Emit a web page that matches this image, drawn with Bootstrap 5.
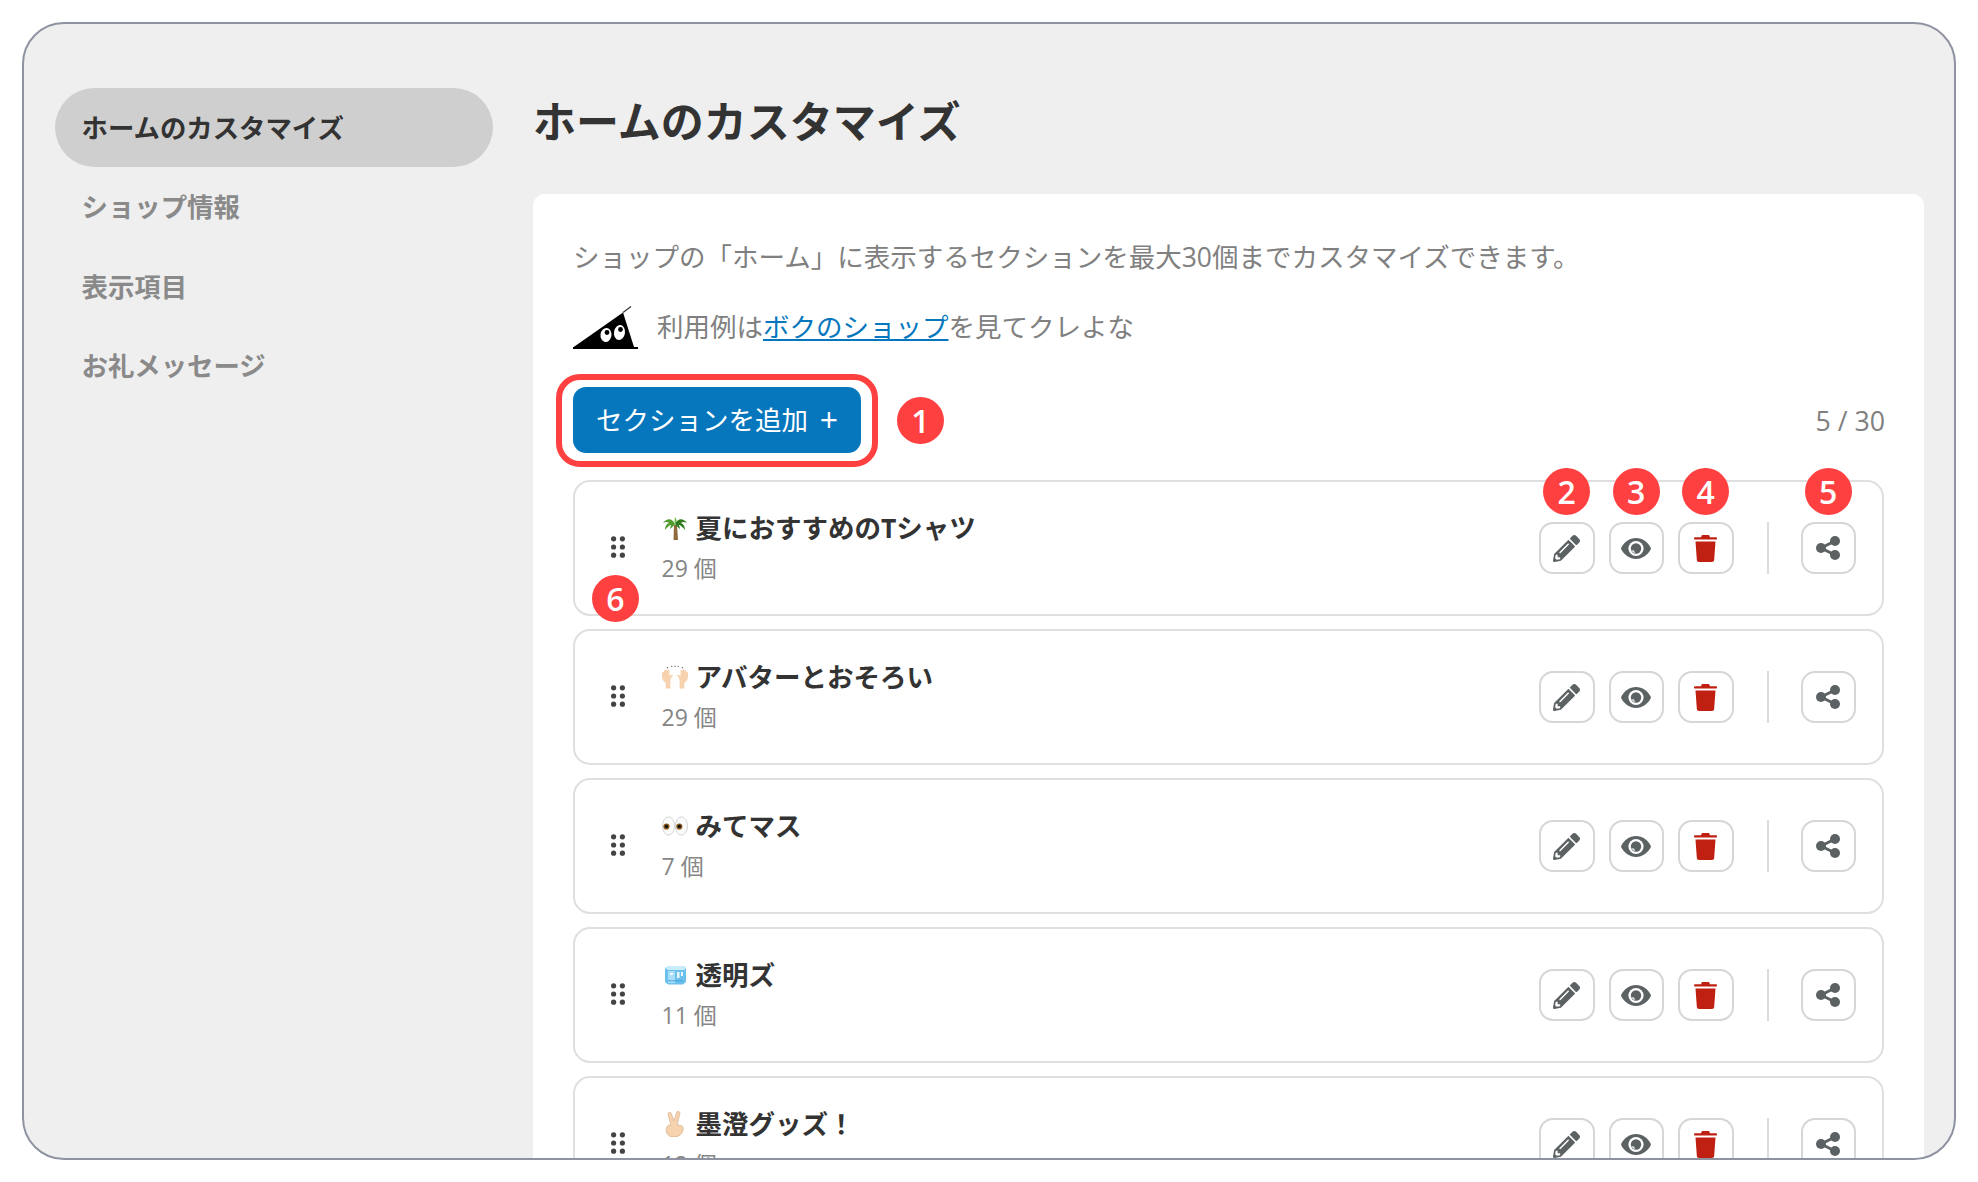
<!DOCTYPE html>
<html lang="ja">
<head>
<meta charset="utf-8">
<title>ホームのカスタマイズ</title>
<link href="https://cdn.jsdelivr.net/npm/bootstrap@5.3.0/dist/css/bootstrap.min.css" rel="stylesheet">
<style>
html,body{height:100%;background:#fff;margin:0;overflow:hidden}
body{font-family:"Open Sans","Noto Sans CJK JP",sans-serif;color:#333}
.frame{position:absolute;left:22px;top:22px;width:1934px;height:1138px;border:2px solid #8f93a1;border-radius:42px;background:#efefef;overflow:hidden;padding:64px 30px 0 31px;gap:40px}
.side{width:438px;flex:none}
.side-link{display:block;height:79.4px;line-height:81px;padding-left:26.500px;border-radius:40px;font-size:26.4px;font-weight:700;color:#8a8a8a;text-decoration:none}
.side-link.on{background:#cfcfcf;color:#333}
.main-col{flex:1;min-width:0}
.page-title{font-size:43px;font-weight:700;line-height:67px;height:66px;margin:0 0 40px;color:#333}
.sheet{background:#fff;border-radius:12px 12px 0 0;padding:40px 40px 0;height:1000px}
.para{font-size:26.5px;line-height:46px;color:#808080;margin:0}
.para a{color:#0777bd}
.mascot-row{margin-top:25px;gap:17px}
.mascot-row .para{margin-top:-1px}
.add-row{margin-top:37px;margin-bottom:27px}
.add-btn{position:relative;width:288px;height:66px;padding:0;background:#0777bd;border:0;border-radius:13px;color:#fff;font-size:26.5px;line-height:66px}
.add-btn:hover{background:#0777bd;color:#fff}
.add-btn::after{content:"";position:absolute;inset:-13px -17px -14px;border:6.5px solid #ff4040;border-radius:24px}
.plus-mark{font-size:32px;line-height:1;margin-left:5px;vertical-align:-2px}
.counter{font-size:26.7px;color:#808080;margin-top:2px;margin-right:-1px}
.anno{position:absolute;width:47px;height:47px;border-radius:50%;background:#ff4040;color:#fff;font-size:32px;font-weight:600;line-height:47px;text-align:center;z-index:3}
.anno-inline{position:static;margin-left:36px;flex:none}
.anno-btn{left:50%;margin-left:-23.5px;top:-56px}
.anno-grip{left:17px;top:92.500px}
.items{gap:13px}
.item{position:relative;height:136px;border:2px solid #dfdfdf;border-radius:17px;background:#fff;padding:0 26px 0 35.5px}
.grip{width:14px;flex:none;margin-right:37px;margin-bottom:2px}
.item-body{flex:1;min-width:0}
.item-title{font-size:26.5px;font-weight:700;line-height:40px;color:#333;gap:8px}
.item-sub{font-size:23px;line-height:40px;color:#858585}
.act-btn{position:relative;width:55.5px;height:52px;padding:0;background:#fff;border:2px solid #d6d6d6;border-radius:14px;display:flex;align-items:center;justify-content:center}
.act-btn:hover{background:#fff;border-color:#d6d6d6}
.acts{gap:14px}
.sep{width:2px;height:52px;background:#dcdcdc;margin:0 17.500px 0 19.500px}
</style>
</head>
<body>
<svg width="0" height="0" class="d-block" aria-hidden="true" style="position:absolute">
  <symbol id="i-grip" viewBox="0 0 14 22"><g fill="#444"><circle cx="2.6" cy="2.8" r="2.6"/><circle cx="11.4" cy="2.8" r="2.6"/><circle cx="2.6" cy="11" r="2.6"/><circle cx="11.4" cy="11" r="2.6"/><circle cx="2.6" cy="19.2" r="2.6"/><circle cx="11.4" cy="19.2" r="2.6"/></g></symbol>
  <symbol id="i-pencil" viewBox="0 0 512 512"><path fill="#5c6163" d="M497.9 142.1l-46.1 46.1c-4.7 4.7-12.3 4.7-17 0l-111-111c-4.7-4.7-4.7-12.3 0-17l46.1-46.1c18.7-18.7 49.1-18.7 67.9 0l60.1 60.1c18.8 18.7 18.8 49.1 0 67.9zM284.2 99.8L21.6 362.4.4 483.9c-2.9 16.4 11.4 30.6 27.8 27.8l121.5-21.3 262.6-262.6c4.7-4.7 4.7-12.3 0-17l-111-111c-4.8-4.7-12.4-4.7-17.1 0zM124.1 339.9c-5.5-5.5-5.5-14.3 0-19.8l154-154c5.5-5.5 14.3-5.5 19.8 0s5.5 14.3 0 19.8l-154 154c-5.5 5.5-14.3 5.5-19.8 0zM88 424h48v36.3l-64.5 11.3-31.1-31.1L51.7 376H88v48z"/></symbol>
  <symbol id="i-eye" viewBox="0 0 30 21"><path fill="#5c6163" d="M15 0C8.6 0 3.2 4 .4 9.4a2.4 2.4 0 0 0 0 2.2C3.2 17 8.6 21 15 21s11.8-4 14.6-9.4a2.4 2.4 0 0 0 0-2.2C26.8 4 21.400 0 15 0z"/><circle cx="15" cy="10.500" r="7.600" fill="#fff"/><circle cx="15" cy="10.500" r="5.200" fill="#5c6163"/><path fill="#fff" d="M10.400 11.400a4.700 4.700 0 0 0 3.800 3.600 3.600 3.600 0 0 1-1-2.400 3.600 3.600 0 0 1-2.800-1.200z" opacity=".9"/></symbol>
  <symbol id="i-trash" viewBox="0 0 23 27"><path fill="#bf2012" d="M8.500 0h6a1 1 0 0 1 1 1l.5 1.200h6a1 1 0 0 1 1 1v.6a.7.700 0 0 1-.7.700H.7a.7.700 0 0 1-.7-.700v-.6a1 1 0 0 1 1-1h6L7.500 1a1 1 0 0 1 1-1z"/><path fill="#bf2012" d="M1.500 6.500h20l-1.300 18a2.500 2.500 0 0 1-2.500 2.500H5.300a2.500 2.500 0 0 1-2.500-2.500z"/></symbol>
  <symbol id="i-share" viewBox="0 0 24 24"><g fill="#5c6163"><circle cx="5" cy="12" r="5"/><circle cx="19" cy="5" r="5"/><circle cx="19" cy="19" r="5"/></g><path stroke="#5c6163" stroke-width="3" d="M5 12L19 5M5 12L19 19"/></symbol>
  <symbol id="e-palm" viewBox="0 0 26 26"><path fill="#8f6a3c" d="M12 10h3l1 15h-4.500z"/><path fill="#4f9c2d" d="M13 9C10 3 5 3 1 8c3-1.500 5-1 6 0-2.500 1-4 3.500-4 7 2-3 5-5 6-5 .5 0-1 2-1 4 2-2 4-3 5-5z"/><path fill="#2f7d20" d="M13 9c3-6 8-6 12-1-3-1.500-5-1-6 0 2.500 1 4 3.500 4 7-2-3-5-5-6-5-.5 0 1 2 1 4-2-2-4-3-5-5z"/><path fill="#66b93c" d="M13 9c-1-4 0-6 0-7 2 2 2 5 0 7z"/></symbol>
  <symbol id="e-hands" viewBox="0 0 28 25"><g fill="#f6d2ae"><path d="M0 12V8a1 1 0 0 1 2 0V6a1 1 0 0 1 2 0V5.500a1 1 0 0 1 2 0V6a1 1 0 0 1 2 0v6c1-1.500 3-2.500 4-1.500-1.500 2-3 3.500-3 6V25H4v-6c-2-1.500-4-3.500-4-7z"/><path d="M28 12V8a1 1 0 0 0-2 0V6a1 1 0 0 0-2 0V5.500a1 1 0 0 0-2 0V6a1 1 0 0 0-2 0v6c-1-1.500-3-2.500-4-1.500 1.500 2 3 3.500 3 6V25h5v-6c2-1.500 4-3.500 4-7z"/></g><g fill="#555"><circle cx="6" cy="2.500" r=".7"/><circle cx="10.500" cy="1" r=".7"/><circle cx="14" cy=".8" r=".7"/><circle cx="17.500" cy="1" r=".7"/><circle cx="22" cy="2.500" r=".7"/></g></symbol>
  <symbol id="e-eyes" viewBox="0 0 27 26"><g fill="#fafafa" stroke="#c9c9c9" stroke-width=".8"><ellipse cx="6.800" cy="13" rx="6.300" ry="9.500"/><ellipse cx="20.200" cy="13" rx="6.300" ry="9.500"/></g><circle cx="4.600" cy="13.500" r="3.200" fill="#8a5a1f"/><circle cx="4.600" cy="13.500" r="1.700" fill="#111"/><circle cx="18" cy="13.500" r="3.200" fill="#8a5a1f"/><circle cx="18" cy="13.500" r="1.700" fill="#111"/></symbol>
  <symbol id="e-ice" viewBox="0 0 26 26"><path fill="#6cc0ee" d="M3 6l4-2h15l2 2v14l-3 2.500H6L3 20z"/><path fill="#c9ecfb" d="M3 6l4-2h15l2 2-2 2H6z"/><path fill="#a9defa" d="M6 9h7v12H6z"/><path fill="#fff" d="M15 10h2.500v6H15zM19 10h2v4h-2zM8 11h3v2H8z" opacity=".85"/><path fill="#3d9ad6" d="M6 18h15v1.500H6z" opacity=".6"/></symbol>
  <symbol id="e-peace" viewBox="3.500 0 19 25"><path fill="#f6d2ae" stroke="#c89e78" stroke-width=".5" d="M7 1.500c1-.7 2-.2 2.500 1l2.500 7 2.500-8c.4-1.200 1.500-1.500 2.400-1s1 1.500.7 2.500L15 13.500c2 0 6 .5 6 3 0 5-4 8.500-9 8.500s-7.500-3-7.500-7c0-2 1-3.500 2.500-4.500h2L6.500 4c-.3-1 0-2 .5-2.500z"/></symbol>
</svg>

<div class="frame d-flex">
  <nav class="side">
    <a class="side-link on" href="#">ホームのカスタマイズ</a>
    <a class="side-link" href="#">ショップ情報</a>
    <a class="side-link" href="#">表示項目</a>
    <a class="side-link" href="#">お礼メッセージ</a>
  </nav>
  <main class="main-col">
    <h1 class="page-title">ホームのカスタマイズ</h1>
    <div class="sheet">
      <p class="para">ショップの「ホーム」に表示するセクションを最大30個までカスタマイズできます。</p>
      <div class="mascot-row d-flex align-items-center">
        <svg width="67" height="44" viewBox="0 0 67 44" aria-hidden="true">
          <path d="M0 41.500L50 6.500l11 34.500z" fill="#000"/>
          <path d="M50 6.500L58 .5" stroke="#333" stroke-width="1.200"/>
          <path d="M0 42H65" stroke="#000" stroke-width="2"/>
          <ellipse cx="33" cy="29" rx="5.500" ry="7" fill="#fff" transform="rotate(8 33 29)"/>
          <ellipse cx="46.500" cy="26.500" rx="5.500" ry="7.500" fill="#fff" transform="rotate(8 46.500 26.500)"/>
          <circle cx="34" cy="26.500" r="2.400" fill="#000"/>
          <circle cx="47.500" cy="23.500" r="2.400" fill="#000"/>
        </svg>
        <p class="para">利用例は<a href="#">ボクのショップ</a>を見てクレよな</p>
      </div>
      <div class="add-row d-flex align-items-center">
        <button class="btn add-btn" type="button">セクションを追加&nbsp;<span class="plus-mark">+</span></button>
        <span class="anno anno-inline">1</span>
        <span class="counter ms-auto">5 / 30</span>
      </div>
      <div class="items d-flex flex-column">

        <div class="item d-flex align-items-center">
          <svg class="grip" height="22" aria-hidden="true"><use href="#i-grip"/></svg>
          <div class="item-body">
            <div class="item-title d-flex align-items-center"><svg width="26" height="26" aria-hidden="true"><use href="#e-palm"/></svg><span>夏におすすめのTシャツ</span></div>
            <div class="item-sub">29 個</div>
          </div>
          <div class="acts d-flex align-items-center">
            <button class="btn act-btn" type="button"><span class="anno anno-btn">2</span><svg width="27" height="27" aria-hidden="true"><use href="#i-pencil"/></svg></button>
            <button class="btn act-btn" type="button"><span class="anno anno-btn">3</span><svg width="30" height="21" aria-hidden="true"><use href="#i-eye"/></svg></button>
            <button class="btn act-btn" type="button"><span class="anno anno-btn">4</span><svg width="23" height="27" aria-hidden="true"><use href="#i-trash"/></svg></button>
            <span class="sep"></span>
            <button class="btn act-btn" type="button"><span class="anno anno-btn">5</span><svg width="24" height="24" aria-hidden="true"><use href="#i-share"/></svg></button>
          </div>
          <span class="anno anno-grip">6</span>
        </div>

        <div class="item d-flex align-items-center">
          <svg class="grip" height="22" aria-hidden="true"><use href="#i-grip"/></svg>
          <div class="item-body">
            <div class="item-title d-flex align-items-center"><svg width="26" height="26" aria-hidden="true"><use href="#e-hands"/></svg><span>アバターとおそろい</span></div>
            <div class="item-sub">29 個</div>
          </div>
          <div class="acts d-flex align-items-center">
            <button class="btn act-btn" type="button"><svg width="27" height="27" aria-hidden="true"><use href="#i-pencil"/></svg></button>
            <button class="btn act-btn" type="button"><svg width="30" height="21" aria-hidden="true"><use href="#i-eye"/></svg></button>
            <button class="btn act-btn" type="button"><svg width="23" height="27" aria-hidden="true"><use href="#i-trash"/></svg></button>
            <span class="sep"></span>
            <button class="btn act-btn" type="button"><svg width="24" height="24" aria-hidden="true"><use href="#i-share"/></svg></button>
          </div>
        </div>

        <div class="item d-flex align-items-center">
          <svg class="grip" height="22" aria-hidden="true"><use href="#i-grip"/></svg>
          <div class="item-body">
            <div class="item-title d-flex align-items-center"><svg width="26" height="26" aria-hidden="true"><use href="#e-eyes"/></svg><span>みてマス</span></div>
            <div class="item-sub">7 個</div>
          </div>
          <div class="acts d-flex align-items-center">
            <button class="btn act-btn" type="button"><svg width="27" height="27" aria-hidden="true"><use href="#i-pencil"/></svg></button>
            <button class="btn act-btn" type="button"><svg width="30" height="21" aria-hidden="true"><use href="#i-eye"/></svg></button>
            <button class="btn act-btn" type="button"><svg width="23" height="27" aria-hidden="true"><use href="#i-trash"/></svg></button>
            <span class="sep"></span>
            <button class="btn act-btn" type="button"><svg width="24" height="24" aria-hidden="true"><use href="#i-share"/></svg></button>
          </div>
        </div>

        <div class="item d-flex align-items-center">
          <svg class="grip" height="22" aria-hidden="true"><use href="#i-grip"/></svg>
          <div class="item-body">
            <div class="item-title d-flex align-items-center"><svg width="26" height="26" aria-hidden="true"><use href="#e-ice"/></svg><span>透明ズ</span></div>
            <div class="item-sub">11 個</div>
          </div>
          <div class="acts d-flex align-items-center">
            <button class="btn act-btn" type="button"><svg width="27" height="27" aria-hidden="true"><use href="#i-pencil"/></svg></button>
            <button class="btn act-btn" type="button"><svg width="30" height="21" aria-hidden="true"><use href="#i-eye"/></svg></button>
            <button class="btn act-btn" type="button"><svg width="23" height="27" aria-hidden="true"><use href="#i-trash"/></svg></button>
            <span class="sep"></span>
            <button class="btn act-btn" type="button"><svg width="24" height="24" aria-hidden="true"><use href="#i-share"/></svg></button>
          </div>
        </div>

        <div class="item d-flex align-items-center">
          <svg class="grip" height="22" aria-hidden="true"><use href="#i-grip"/></svg>
          <div class="item-body">
            <div class="item-title d-flex align-items-center"><svg width="26" height="26" aria-hidden="true"><use href="#e-peace"/></svg><span>墨澄グッズ！</span></div>
            <div class="item-sub">12 個</div>
          </div>
          <div class="acts d-flex align-items-center">
            <button class="btn act-btn" type="button"><svg width="27" height="27" aria-hidden="true"><use href="#i-pencil"/></svg></button>
            <button class="btn act-btn" type="button"><svg width="30" height="21" aria-hidden="true"><use href="#i-eye"/></svg></button>
            <button class="btn act-btn" type="button"><svg width="23" height="27" aria-hidden="true"><use href="#i-trash"/></svg></button>
            <span class="sep"></span>
            <button class="btn act-btn" type="button"><svg width="24" height="24" aria-hidden="true"><use href="#i-share"/></svg></button>
          </div>
        </div>

      </div>
    </div>
  </main>
</div>
<script src="https://cdn.jsdelivr.net/npm/bootstrap@5.3.0/dist/js/bootstrap.bundle.min.js"></script>
</body>
</html>
